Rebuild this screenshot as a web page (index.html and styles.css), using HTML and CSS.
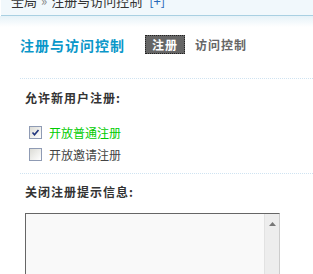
FILE: index.html
```html
<!DOCTYPE html>
<html lang="zh-CN">
<head>
  <meta charset="UTF-8">
  <title>注册与访问控制</title>
  <link rel="stylesheet" href="styles.css">
</head>
<body>
  <div class="crumb">
    <span class="crumb-text">全局<em>&raquo;</em>注册与访问控制 <a href="#">[+]</a></span>
  </div>
  <div class="crumb-shade"></div>

  <div class="main">
    <div class="title-row">
      <h3>注册与访问控制</h3>
      <ul class="tabs">
        <li class="current"><a href="#">注册</a></li>
        <li><a href="#">访问控制</a></li>
      </ul>
    </div>

    <div class="block">
      <h4>允许新用户注册:</h4>
      <ul class="checks">
        <li class="on">
          <span class="box"><svg width="9" height="9" viewBox="0 0 9 9"><path d="M1.5 4.5 L3.5 6.8 L7.5 2" fill="none" stroke="#21357d" stroke-width="1.6"/></svg></span>
          开放普通注册
        </li>
        <li>
          <span class="box"></span>
          开放邀请注册
        </li>
      </ul>
    </div>

    <div class="block last">
      <h4>关闭注册提示信息:</h4>
      <div class="msg">
        <textarea rows="6"></textarea>
        <div class="scroll">
          <svg width="7" height="4" viewBox="0 0 7 4"><path d="M0 4 L3.5 0 L7 4 Z" fill="#777"/></svg>
        </div>
      </div>
    </div>
  </div>
</body>
</html>
```

FILE: styles.css
```css
html,
body {
  margin: 0;
  padding: 0;
}

body {
  font-family: "Noto Sans CJK SC", "DejaVu Sans", sans-serif;
  font-size: 12px;
  color: #333;
  background: #fff;
  overflow: hidden;
}

.crumb {
  margin-left: 1px;
  height: 15px;
  background: #f1f8fc;
  border-bottom: 1px solid #a9d0e2;
  overflow: hidden;
}

.crumb-text {
  display: block;
  margin-top: -8px;
  padding-left: 10px;
  font-size: 13px;
  line-height: 18px;
  color: #333;
}

.crumb-text em {
  font-style: normal;
  color: #888;
  margin: 0 4px;
}

.crumb-text a {
  margin-left: 4px;
  color: #2468b8;
  text-decoration: none;
}

.crumb-shade {
  height: 11px;
  background: linear-gradient(#e6f2f8, #fff);
}

.main {
  padding-left: 20px;
}

.title-row {
  display: flex;
  align-items: center;
  margin-top: 8px;
  height: 19px;
  padding-bottom: 24px;
  border-bottom: 1px dotted #cfe3f1;
}

.title-row h3 {
  margin: 0 20px 0 0;
  font-size: 14px;
  letter-spacing: 1px;
  color: #0a97c9;
}

.tabs {
  display: flex;
  gap: 3px;
  margin: 0;
  padding: 0;
  list-style: none;
}

.tabs li a {
  display: block;
  height: 17px;
  padding: 0 6px;
  font-size: 12px;
  font-weight: bold;
  letter-spacing: 1px;
  line-height: 17px;
  color: #666;
  text-decoration: none;
  border: 1px solid transparent;
}

.tabs li.current a {
  background: #666;
  color: #fff;
  border: 1px dotted #222;
}

.block {
  padding: 11px 0 0 5px;
  border-bottom: 1px dotted #cfe3f1;
}

.block h4 {
  margin: 0;
  font-size: 12px;
  line-height: 16px;
  letter-spacing: 1px;
  color: #333;
}

.checks {
  margin: 15px 0 0;
  padding: 0 0 8px 4px;
  list-style: none;
}

.checks li {
  display: flex;
  align-items: center;
  gap: 7px;
  height: 22px;
  color: #444;
}

.checks li.on {
  color: #0c0;
}

.box {
  display: flex;
  align-items: center;
  justify-content: center;
  width: 11px;
  height: 11px;
  border: 1px solid #8f9bb4;
  background: linear-gradient(135deg, #dcdcd6, #fff);
}

.block.last {
  padding-top: 10px;
  border-bottom: 0;
}

.msg {
  display: flex;
  margin-top: 13px;
  width: 255px;
  height: 110px;
  box-sizing: border-box;
  background: #f9f9f9;
  border: 1px solid #666;
  border-right-color: #ccc;
  border-bottom-color: #ccc;
}

.msg textarea {
  flex: 1;
  margin: 0;
  padding: 2px;
  border: 0;
  background: transparent;
  resize: none;
  outline: none;
}

.scroll {
  display: flex;
  justify-content: center;
  width: 14px;
  padding-top: 8px;
  background: #ededed;
  border-left: 1px solid #e2e2e2;
}

.scroll svg {
  display: block;
}
```
